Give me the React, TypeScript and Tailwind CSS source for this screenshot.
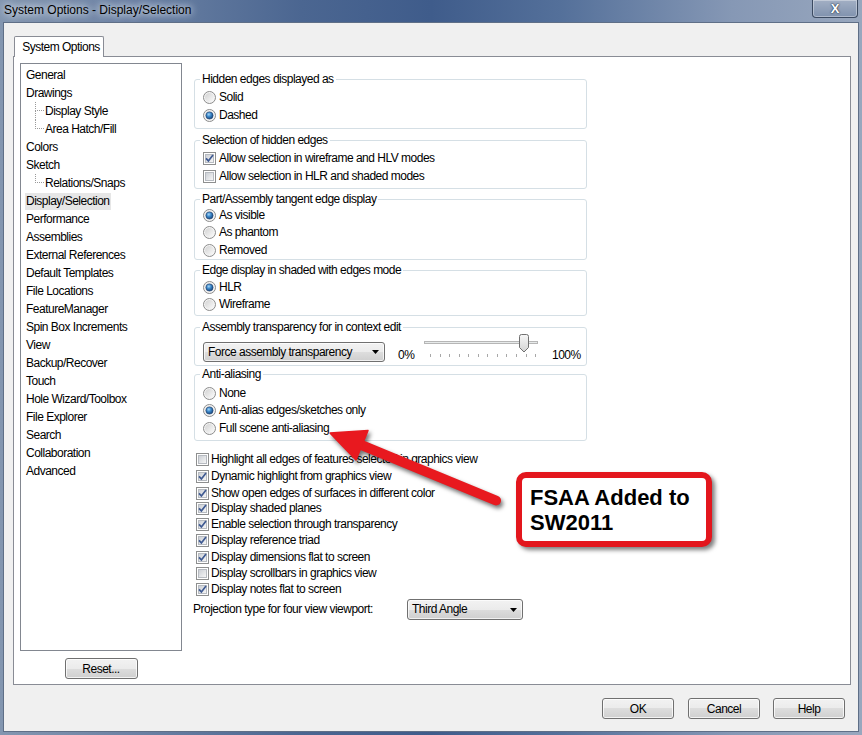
import React from "react";

const F = "font-['Liberation_Sans',Arial,sans-serif]";

function Defs() {
  return (
    <svg width="0" height="0" className="absolute">
      <defs>
        <linearGradient id="rIn" x1="0" y1="0" x2="1" y2="1">
          <stop offset="0" stopColor="#d2d2d2" />
          <stop offset="1" stopColor="#fbfbfb" />
        </linearGradient>
        <radialGradient id="rDot" cx="0.4" cy="0.35" r="0.7">
          <stop offset="0" stopColor="#a4d6f8" />
          <stop offset="0.45" stopColor="#3a86c8" />
          <stop offset="1" stopColor="#163e72" />
        </radialGradient>
        <linearGradient id="cbIn" x1="0" y1="0" x2="1" y2="1">
          <stop offset="0" stopColor="#c9cdd3" />
          <stop offset="1" stopColor="#f8f8f8" />
        </linearGradient>
        <linearGradient id="thumb" x1="0" y1="0" x2="0" y2="1">
          <stop offset="0" stopColor="#f7f7f7" />
          <stop offset="1" stopColor="#d3d3d3" />
        </linearGradient>
      </defs>
    </svg>
  );
}

function Radio({ checked }: { checked?: boolean }) {
  return (
    <svg width="13" height="13" viewBox="0 0 13 13" className="shrink-0">
      <circle cx="6.5" cy="6.5" r="6" fill="#f4f4f4" stroke="#8c8c8c" />
      <circle cx="6.5" cy="6.5" r="4.5" fill="url(#rIn)" />
      {checked && (
        <circle cx="6.5" cy="6.5" r="3.6" fill="url(#rDot)" stroke="#1d3f6e" strokeWidth="0.6" />
      )}
    </svg>
  );
}

function Check({ checked }: { checked?: boolean }) {
  return (
    <svg width="13" height="13" viewBox="0 0 13 13" className="shrink-0">
      <rect x="0.5" y="0.5" width="12" height="12" fill="#fff" stroke="#8e8f8f" />
      <rect x="2.5" y="2.5" width="8" height="8" fill="url(#cbIn)" stroke="#b7bbc1" />
      {checked && (
        <path d="M3 6.3 L5.4 8.9 L10 3" fill="none" stroke="#3f5a92" strokeWidth="1.7" />
      )}
    </svg>
  );
}

function Combo({ text, cls }: { text: string; cls: string }) {
  return (
    <div
      className={`flex items-center justify-between rounded-[3px] border border-[#707070] bg-[linear-gradient(to_bottom,#f2f2f2_0%,#ebebeb_50%,#dddddd_50%,#cfcfcf_100%)] shadow-[inset_0_0_0_1px_rgba(255,255,255,0.7)] pl-[4px] pr-[5px] ${cls}`}
    >
      <span>{text}</span>
      <svg width="7" height="4" viewBox="0 0 7 4">
        <path d="M0 0H7L3.5 4Z" fill="#000" />
      </svg>
    </div>
  );
}

function Btn({ label, cls }: { label: string; cls: string }) {
  return (
    <div
      className={`flex items-center justify-center h-[21px] rounded-[3px] border border-[#707070] bg-[linear-gradient(to_bottom,#f2f2f2_0%,#ebebeb_50%,#dddddd_50%,#cfcfcf_100%)] shadow-[inset_0_0_0_1px_rgba(255,255,255,0.75)] ${cls}`}
    >
      {label}
    </div>
  );
}

type Row = { label: string; kind: "r" | "c"; checked?: boolean; h: string };

function Opt({ row, gap }: { row: Row; gap: string }) {
  return (
    <div className={`flex items-center ${gap} ${row.h}`}>
      {row.kind === "r" ? <Radio checked={row.checked} /> : <Check checked={row.checked} />}
      <span className="leading-[15px] whitespace-nowrap">{row.label}</span>
    </div>
  );
}

function Group({
  title,
  rows,
  cls,
  inner,
}: {
  title: string;
  rows: Row[];
  cls: string;
  inner: string;
}) {
  return (
    <fieldset className={`border border-[#d5dfe5] rounded-[3px] px-[5px] ${cls}`}>
      <legend className="px-[2px] leading-[16px]">{title}</legend>
      <div className={`ml-[3px] flex flex-col ${inner}`}>
        {rows.map((r) => (
          <Opt key={r.label} row={r} gap="gap-[3px]" />
        ))}
      </div>
    </fieldset>
  );
}

const tree: { label: string; level: number; last?: boolean; sel?: boolean }[] = [
  { label: "General", level: 0 },
  { label: "Drawings", level: 0 },
  { label: "Display Style", level: 1 },
  { label: "Area Hatch/Fill", level: 1, last: true },
  { label: "Colors", level: 0 },
  { label: "Sketch", level: 0 },
  { label: "Relations/Snaps", level: 1, last: true },
  { label: "Display/Selection", level: 0, sel: true },
  { label: "Performance", level: 0 },
  { label: "Assemblies", level: 0 },
  { label: "External References", level: 0 },
  { label: "Default Templates", level: 0 },
  { label: "File Locations", level: 0 },
  { label: "FeatureManager", level: 0 },
  { label: "Spin Box Increments", level: 0 },
  { label: "View", level: 0 },
  { label: "Backup/Recover", level: 0 },
  { label: "Touch", level: 0 },
  { label: "Hole Wizard/Toolbox", level: 0 },
  { label: "File Explorer", level: 0 },
  { label: "Search", level: 0 },
  { label: "Collaboration", level: 0 },
  { label: "Advanced", level: 0 },
];

const bottomRows: Row[] = [
  { label: "Highlight all edges of features selected in graphics view", kind: "c", h: "h-[17px]" },
  { label: "Dynamic highlight from graphics view", kind: "c", checked: true, h: "h-[17px]" },
  { label: "Show open edges of surfaces in different color", kind: "c", checked: true, h: "h-[16px]" },
  { label: "Display shaded planes", kind: "c", checked: true, h: "h-[15px]" },
  { label: "Enable selection through transparency", kind: "c", checked: true, h: "h-[16px]" },
  { label: "Display reference triad", kind: "c", checked: true, h: "h-[17px]" },
  { label: "Display dimensions flat to screen", kind: "c", checked: true, h: "h-[17px]" },
  { label: "Display scrollbars in graphics view", kind: "c", h: "h-[15px]" },
  { label: "Display notes flat to screen", kind: "c", checked: true, h: "h-[16px]" },
];

function Slider() {
  const ticks = Array.from({ length: 12 }, (_, i) => 12 + i * 9.55);
  return (
    <svg width="126" height="24" viewBox="0 0 126 24" className="mt-[-8px] shrink-0">
      <rect x="6.5" y="7.5" width="113" height="2" fill="#e7eaea" stroke="#b6b6b6" />
      {ticks.map((x, i) => (
        <line key={i} x1={Math.round(x) + 0.5} y1="20" x2={Math.round(x) + 0.5} y2="23" stroke="#a8a8a8" />
      ))}
      <path
        d="M101.5 2.5 Q101.5 0.5 103.5 0.5 H108.5 Q110.5 0.5 110.5 2.5 V13.5 L106 18 L101.5 13.5 Z"
        fill="url(#thumb)"
        stroke="#707070"
      />
    </svg>
  );
}

export default function App() {
  return (
    <div
      className={`relative w-[862px] h-[735px] overflow-hidden flex flex-col bg-[linear-gradient(to_right,#8396b0_0%,#6c82a4_15%,#4b6691_35%,#3f5c8b_50%,#54709a_65%,#8698b5_85%,#98a7be_100%)] ${F} text-[12px] tracking-[-0.5px] text-black`}
    >
      <Defs />
      {/* title bar */}
      <div className="h-[22px] flex items-start justify-between shrink-0">
        <div className="pl-[4px] pt-[3px] leading-[15px] tracking-normal [text-shadow:0_0_6px_#e3e9f2,0_0_10px_#e3e9f2]">
          System Options - Display/Selection
        </div>
        <div className="mr-[4px] w-[46px] h-[18px] rounded-b-[4px] border border-t-0 border-[#3b4a61] bg-[linear-gradient(to_bottom,#a2afc4,#8092ae)] shadow-[inset_0_0_0_1px_rgba(255,255,255,0.35)] flex items-center justify-center text-white font-bold text-[13px] leading-none tracking-normal [text-shadow:0_0_1px_#1f2d40,0_0_2px_#1f2d40]">
          X
        </div>
      </div>

      {/* client area */}
      <div className="flex-1 mx-[3px] mb-[3px] border border-[#5f6f87] bg-[#f0f0f0] flex flex-col pt-[13px]">
        {/* tab */}
        <div className="relative z-10 -mb-[1px] ml-[10px] w-[90px] h-[21px] bg-white border border-b-0 border-[#898c95] rounded-t-[2px] flex items-center justify-center pl-[4px] leading-[15px]">
          System Options
        </div>
        {/* panel */}
        <div className="ml-[9px] w-[838px] h-[629px] bg-white border border-[#898c95] flex pl-[6px] pt-[6px]">
          {/* left column */}
          <div className="w-[162px] flex flex-col">
            <div className="h-[588px] border border-[#828790] bg-white pt-[2px] flex flex-col">
              {tree.map((t) =>
                t.level === 0 ? (
                  <div key={t.label} className="h-[18px] flex items-center pl-[5px]">
                    <span
                      className={`leading-[17px] ${t.sel ? "bg-[#e6e6e6] -ml-[1px] px-[1px]" : ""}`}
                    >
                      {t.label}
                    </span>
                  </div>
                ) : (
                  <div key={t.label} className="h-[18px] flex items-stretch pl-[14px]">
                    <div className="w-[9px] flex flex-col">
                      <div className="h-[9px] border-l border-b border-dotted border-[#9a9a9a]" />
                      <div
                        className={`flex-1 ${t.last ? "" : "border-l border-dotted border-[#9a9a9a]"}`}
                      />
                    </div>
                    <span className="ml-[1px] self-center leading-[17px]">{t.label}</span>
                  </div>
                )
              )}
            </div>
            <Btn label="Reset..." cls="mt-[7px] w-[73px] mx-auto" />
          </div>

          {/* right column */}
          <div className="ml-[12px] w-[393px] pt-[8px] flex flex-col">
            <Group
              title="Hidden edges displayed as"
              cls=""
              inner="pt-[1px] pb-[4px]"
              rows={[
                { label: "Solid", kind: "r", h: "h-[18px]" },
                { label: "Dashed", kind: "r", checked: true, h: "h-[18px]" },
              ]}
            />
            <Group
              title="Selection of hidden edges"
              cls="mt-[3px]"
              inner="pt-[1px] pb-[3px]"
              rows={[
                { label: "Allow selection in wireframe and HLV modes", kind: "c", checked: true, h: "h-[18px]" },
                { label: "Allow selection in HLR and shaded modes", kind: "c", h: "h-[18px]" },
              ]}
            />
            <Group
              title="Part/Assembly tangent edge display"
              cls="mt-[2px]"
              inner=""
              rows={[
                { label: "As visible", kind: "r", checked: true, h: "h-[17px]" },
                { label: "As phantom", kind: "r", h: "h-[17px]" },
                { label: "Removed", kind: "r", h: "h-[18px]" },
              ]}
            />
            <Group
              title="Edge display in shaded with edges mode"
              cls="mt-[2px]"
              inner="pt-[1px] pb-[2px]"
              rows={[
                { label: "HLR", kind: "r", checked: true, h: "h-[17px]" },
                { label: "Wireframe", kind: "r", h: "h-[17px]" },
              ]}
            />
            <fieldset className="mt-[3px] border border-[#d5dfe5] rounded-[3px] px-[5px]">
              <legend className="px-[2px] leading-[16px]">Assembly transparency for in context edit</legend>
              <div className="ml-[3px] pt-[7px] pb-[3px] flex items-start">
                <Combo text="Force assembly transparency" cls="w-[182px] h-[20px] leading-[15px]" />
                <span className="ml-[13px] w-[20px] mt-[6px] leading-[14px]">0%</span>
                <Slider />
                <span className="ml-[8px] mt-[6px] leading-[14px]">100%</span>
              </div>
            </fieldset>
            <Group
              title="Anti-aliasing"
              cls=""
              inner="pt-[2px] pb-[3px]"
              rows={[
                { label: "None", kind: "r", h: "h-[18px]" },
                { label: "Anti-alias edges/sketches only", kind: "r", checked: true, h: "h-[17px]" },
                { label: "Full scene anti-aliasing", kind: "r", h: "h-[18px]" },
              ]}
            />
            <div className="mt-[10px] pl-[2px] flex flex-col">
              {bottomRows.map((r) => (
                <Opt key={r.label} row={r} gap="gap-[2px]" />
              ))}
            </div>
            <div className="mt-[2px] h-[21px] flex items-center -ml-[1px]">
              <span className="w-[214px] leading-[15px]">Projection type for four view viewport:</span>
              <Combo text="Third Angle" cls="w-[116px] h-[21px] leading-[15px]" />
            </div>
          </div>
        </div>

        {/* bottom buttons */}
        <div className="mt-[13px] flex justify-end pr-[13px]">
          <Btn label="OK" cls="w-[72px]" />
          <Btn label="Cancel" cls="ml-[14px] w-[72px]" />
          <Btn label="Help" cls="ml-[13px] w-[72px]" />
        </div>
      </div>

      {/* annotation arrow */}
      <svg
        className="absolute left-0 top-0 pointer-events-none drop-shadow-[2px_3px_2px_rgba(0,0,0,0.55)]"
        width="862"
        height="735"
        viewBox="0 0 862 735"
      >
        <line x1="358" y1="443.7" x2="496" y2="500.5" stroke="#e8191f" strokeWidth="10" strokeLinecap="round" />
        <polygon points="330,433 356,460 368,430.5" fill="#e8191f" stroke="#e8191f" strokeWidth="1.5" strokeLinejoin="round" />
      </svg>

      {/* callout */}
      <div className="absolute left-[516px] top-[472px] w-[196px] h-[75px] rounded-[10px] border-[6px] border-[#e3161d] bg-white shadow-[3px_3px_4px_rgba(0,0,0,0.5)] pl-[8px] pt-[7px] font-bold text-[22px] leading-[25px] tracking-normal">
        FSAA Added to
        <br />
        SW2011
      </div>
    </div>
  );
}
